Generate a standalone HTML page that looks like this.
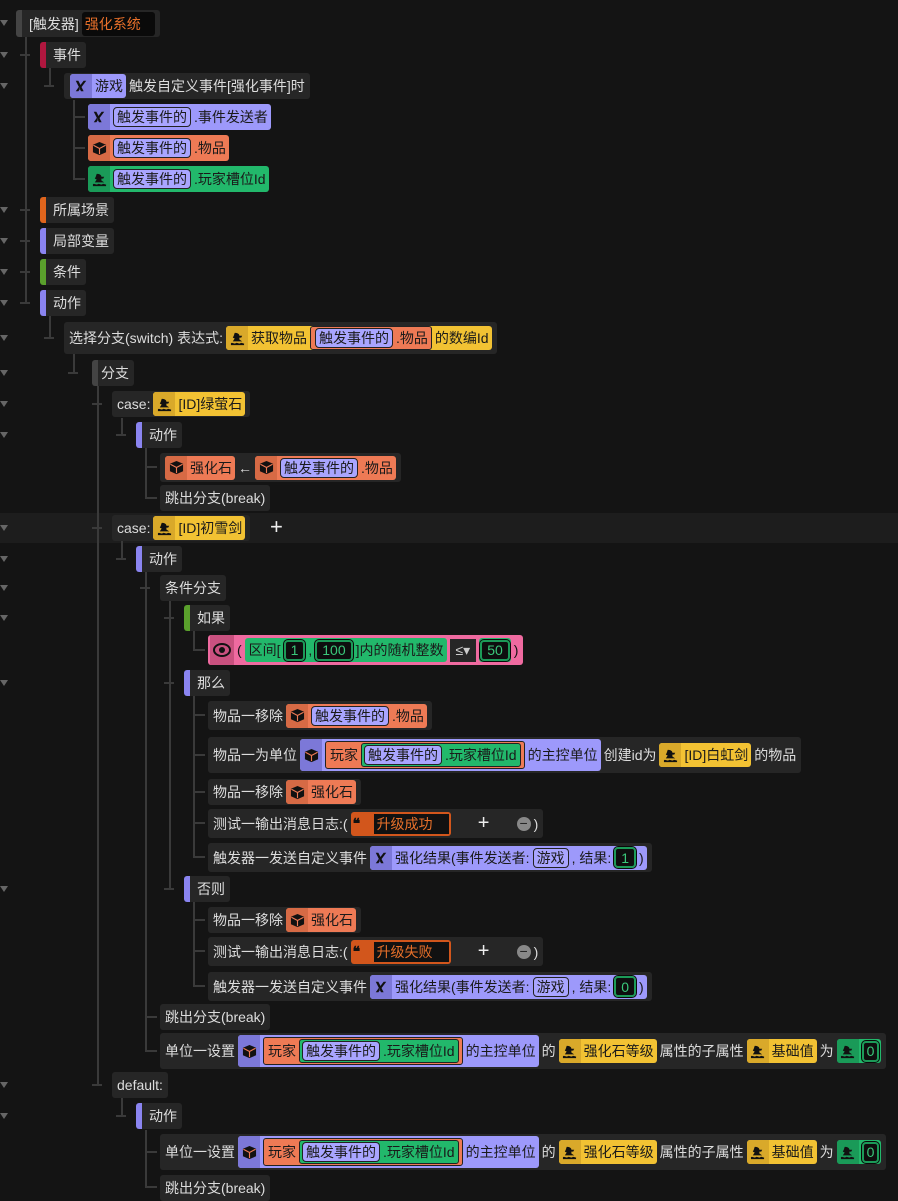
<!DOCTYPE html><html><head><meta charset="utf-8"><style>
body{margin:0;width:898px;height:1199px;background:#141414;overflow:hidden;font-family:"Liberation Sans","Noto Sans CJK SC",sans-serif;font-size:14px;color:#ddd;position:relative}
.n{position:absolute;height:26px;display:flex;align-items:center;background:#262626;border-radius:3px;padding:0 5px;white-space:nowrap;box-sizing:border-box;gap:3px}
.s{border-left:6px solid #444;padding-left:7px}
.c{display:inline-flex;align-items:center;height:24px;border-radius:3px;padding:0 3px 0 0;color:#1a1a1a;gap:3px;box-sizing:border-box}
.p{background:#9d99fb}.o{background:#ee7a55}.g{background:#22b86b}.y{background:#f2c233}.pk{background:#ef6aa0}
.ic{display:inline-flex;align-items:center;justify-content:center;width:22px;height:100%;border-radius:3px 0 0 3px}
.p>.ic{background:#7c78d8}.o>.ic{background:#d66a45}.g>.ic{background:#1a9a58}.y>.ic{background:#d9a92a}
.r{display:inline-flex;align-items:center;height:20px;border:1.5px solid #222;border-radius:4px;background:#a9a5ff;padding:0 3px;color:#1a1a1a;box-sizing:border-box}
.num{display:inline-flex;align-items:center;height:21px;border:2px solid #1c9a58;outline:1px solid #0a0a0a;border-radius:4px;background:#0e0e0e;color:#3ac87a;padding:0 5px;box-sizing:border-box}
.vl{position:absolute;width:2px;background:#3a3a3a}
.hl{position:absolute;height:2px;width:10px;background:#3a3a3a}
.tri{position:absolute;left:0;width:0;height:0;border-left:4px solid transparent;border-right:4px solid transparent;border-top:6px solid #666}
</style></head><body>
<svg width="0" height="0" style="position:absolute"><defs>
<symbol id="x" viewBox="0 0 16 16"><path d="M2 2h3l6 12H8zM11 2h3L8 10l-1.5-2zM2 14h3l2-3-1.5-2z" fill="#111"/></symbol>
<symbol id="b" viewBox="0 0 16 16"><path d="M8 1l7 3v8l-7 3-7-3V4z" fill="#111"/><path d="M8 8v6M1.5 4.5L8 8l6.5-3.5" stroke="#ee7a55" stroke-width="1.2" fill="none"/></symbol>
<symbol id="d" viewBox="0 0 16 16"><path d="M5 2c3 0 5 1 5 3l3 0-1 2-2 0 0 2 3 2H3l2-3-2-1 1-2z" fill="#111"/><path d="M1 13c2-1 3 1 5 0s3 1 5 0 3 1 4 0v2H1z" fill="#111"/></symbol>
</defs></svg>
<div style="position:absolute;left:0;top:513px;width:898px;height:30px;background:#1d1d1d"></div>
<div class="vl" style="left:25px;top:35px;height:269px"></div>
<div class="vl" style="left:49px;top:68px;height:19px"></div><div class="vl" style="left:49px;top:316px;height:23px"></div>
<div class="vl" style="left:73px;top:100px;height:80px"></div><div class="vl" style="left:73px;top:352px;height:22px"></div>
<div class="vl" style="left:97px;top:386px;height:700px"></div>
<div class="vl" style="left:121px;top:418px;height:18px"></div><div class="vl" style="left:121px;top:541px;height:19px"></div><div class="vl" style="left:121px;top:1098px;height:19px"></div>
<div class="vl" style="left:145px;top:448px;height:51px"></div><div class="vl" style="left:145px;top:572px;height:480px"></div><div class="vl" style="left:145px;top:1130px;height:58px"></div>
<div class="vl" style="left:169px;top:600px;height:290px"></div>
<div class="vl" style="left:193px;top:631px;height:20px"></div><div class="vl" style="left:193px;top:696px;height:162px"></div><div class="vl" style="left:193px;top:902px;height:85px"></div>
<div class="hl" style="left:20px;top:54px"></div><div class="hl" style="left:20px;top:209px"></div><div class="hl" style="left:20px;top:240px"></div><div class="hl" style="left:20px;top:271px"></div><div class="hl" style="left:20px;top:302px"></div>
<div class="hl" style="left:44px;top:85px"></div><div class="hl" style="left:44px;top:337px"></div>
<div class="hl" style="left:75px;top:116px"></div><div class="hl" style="left:75px;top:147px"></div><div class="hl" style="left:75px;top:178px"></div><div class="hl" style="left:68px;top:372px"></div>
<div class="hl" style="left:92px;top:403px"></div><div class="hl" style="left:92px;top:527px"></div><div class="hl" style="left:92px;top:1084px"></div>
<div class="hl" style="left:116px;top:434px"></div><div class="hl" style="left:116px;top:558px"></div><div class="hl" style="left:116px;top:1115px"></div>
<div class="hl" style="left:147px;top:466px"></div><div class="hl" style="left:147px;top:497px"></div><div class="hl" style="left:140px;top:587px"></div><div class="hl" style="left:147px;top:1016px"></div><div class="hl" style="left:147px;top:1050px"></div><div class="hl" style="left:147px;top:1151px"></div><div class="hl" style="left:147px;top:1186px"></div>
<div class="hl" style="left:164px;top:617px"></div><div class="hl" style="left:164px;top:682px"></div><div class="hl" style="left:164px;top:888px"></div>
<div class="hl" style="left:195px;top:649px"></div><div class="hl" style="left:195px;top:714px"></div><div class="hl" style="left:195px;top:754px"></div><div class="hl" style="left:195px;top:791px"></div><div class="hl" style="left:195px;top:822px"></div><div class="hl" style="left:195px;top:856px"></div><div class="hl" style="left:195px;top:919px"></div><div class="hl" style="left:195px;top:950px"></div><div class="hl" style="left:195px;top:985px"></div>
<div class="tri" style="top:20px"></div><div class="tri" style="top:52px"></div><div class="tri" style="top:83px"></div><div class="tri" style="top:207px"></div><div class="tri" style="top:238px"></div><div class="tri" style="top:269px"></div><div class="tri" style="top:300px"></div><div class="tri" style="top:335px"></div><div class="tri" style="top:370px"></div><div class="tri" style="top:401px"></div><div class="tri" style="top:432px"></div><div class="tri" style="top:525px"></div><div class="tri" style="top:556px"></div><div class="tri" style="top:585px"></div><div class="tri" style="top:615px"></div><div class="tri" style="top:680px"></div><div class="tri" style="top:886px"></div><div class="tri" style="top:1082px"></div><div class="tri" style="top:1113px"></div>

<div class="n s" style="left:16px;top:10px;height:27px">[触发器]<span style="background:#0a0a0a;color:#e8702a;padding:2px 14px 2px 3px;border-radius:3px">强化系统</span></div>
<div class="n s" style="left:40px;top:42px;border-left-color:#b0173f">事件</div>
<div class="n" style="left:64px;top:73px;padding-left:6px"><span class="c p"><span class="ic"><svg width="14" height="14"><use href="#x"/></svg></span>游戏</span>触发自定义事件[强化事件]时</div>
<span class="c p" style="position:absolute;left:88px;top:104px;height:26px"><span class="ic"><svg width="14" height="14"><use href="#x"/></svg></span><span class="r">触发事件的</span>.事件发送者</span>
<span class="c o" style="position:absolute;left:88px;top:135px;height:26px"><span class="ic"><svg width="15" height="15"><use href="#b"/></svg></span><span class="r">触发事件的</span>.物品</span>
<span class="c g" style="position:absolute;left:88px;top:166px;height:26px"><span class="ic"><svg width="15" height="15"><use href="#d"/></svg></span><span class="r">触发事件的</span>.玩家槽位Id</span>
<div class="n s" style="left:40px;top:197px;border-left-color:#e0651d">所属场景</div>
<div class="n s" style="left:40px;top:228px;border-left-color:#8a84f0">局部变量</div>
<div class="n s" style="left:40px;top:259px;border-left-color:#5aa02c">条件</div>
<div class="n s" style="left:40px;top:290px;border-left-color:#8a84f0">动作</div>
<div class="n" style="left:64px;top:322px;height:32px">选择分支(switch) 表达式:<span class="c y"><span class="ic"><svg width="15" height="15"><use href="#d"/></svg></span>获取物品<span class="c o" style="padding-left:4px;border:1.5px solid #222"><span class="r">触发事件的</span>.物品</span>的数编Id</span></div>
<div class="n s" style="left:92px;top:360px;padding-left:3px">分支</div>
<div class="n" style="left:112px;top:391px">case:<span class="c y"><span class="ic"><svg width="15" height="15"><use href="#d"/></svg></span>[ID]绿萤石</span></div>
<div class="n s" style="left:136px;top:422px;border-left-color:#8a84f0">动作</div>
<div class="n" style="left:160px;top:453px;height:29px"><span class="c o"><span class="ic"><svg width="15" height="15"><use href="#b"/></svg></span>强化石</span> ← <span class="c o"><span class="ic"><svg width="15" height="15"><use href="#b"/></svg></span><span class="r">触发事件的</span>.物品</span></div>
<div class="n" style="left:160px;top:485px">跳出分支(break)</div>
<div class="n" style="left:112px;top:515px">case:<span class="c y"><span class="ic"><svg width="15" height="15"><use href="#d"/></svg></span>[ID]初雪剑</span></div>
<div style="position:absolute;left:270px;top:514px;font-size:22px;color:#eee">+</div>
<div class="n s" style="left:136px;top:546px;border-left-color:#8a84f0">动作</div>
<div class="n" style="left:160px;top:575px">条件分支</div>
<div class="n s" style="left:184px;top:605px;border-left-color:#5aa02c">如果</div>
<div class="n pk" style="left:208px;top:635px;height:30px;padding-left:2px;color:#111">
<span style="display:inline-flex;width:24px;height:100%;background:#c9517f;align-items:center;justify-content:center"><svg width="18" height="14"><ellipse cx="9" cy="7" rx="8" ry="6" fill="none" stroke="#111" stroke-width="2"/><circle cx="9" cy="7" r="3" fill="#111"/></svg></span>(<span class="c g" style="padding-left:4px">区间[<span class="num">1</span>,<span class="num">100</span>]内的随机整数</span><span style="background:#262626;color:#ccc;padding:3px 6px">≤▾</span><span class="c g" style="padding:0 1px"><span class="num">50</span></span>)</div>
<div class="n s" style="left:184px;top:670px;border-left-color:#8a84f0">那么</div>
<div class="n" style="left:208px;top:701px;height:29px">物品一移除<span class="c o"><span class="ic"><svg width="15" height="15"><use href="#b"/></svg></span><span class="r">触发事件的</span>.物品</span></div>
<div class="n" style="left:208px;top:737px;height:36px">物品一为单位<span class="c p" style="height:32px"><span class="ic"><svg width="15" height="15"><use href="#b"/></svg></span><span class="c o" style="padding-left:4px;height:28px;border:1.5px solid #222">玩家<span class="c g" style="padding-left:2px;border:1.5px solid #222"><span class="r">触发事件的</span>.玩家槽位Id</span></span>的主控单位</span>创建id为<span class="c y"><span class="ic"><svg width="15" height="15"><use href="#d"/></svg></span>[ID]白虹剑</span>的物品</div>
<div class="n" style="left:208px;top:779px">物品一移除<span class="c o"><span class="ic"><svg width="15" height="15"><use href="#b"/></svg></span>强化石</span></div>
<div class="n" style="left:208px;top:809px;height:29px">测试一输出消息日志:(<span class="c" style="background:#d2561c;padding:0 2px;width:100px"><b style="color:#111;width:18px">❝</b><span style="background:#111;color:#e8702a;flex:1;height:20px;padding-left:3px">升级成功</span></span><span style="width:60px;text-align:center;font-size:20px;color:#eee">+</span><span style="display:inline-block;width:14px;height:14px;border-radius:50%;background:#888;color:#222;text-align:center;line-height:13px">−</span>)</div>
<div class="n" style="left:208px;top:843px;height:29px">触发器一发送自定义事件<span class="c p"><span class="ic"><svg width="14" height="14"><use href="#x"/></svg></span>强化结果(事件发送者: <span class="r">游戏</span>, 结果: <span class="num">1</span>)</span></div>
<div class="n s" style="left:184px;top:876px;border-left-color:#8a84f0">否则</div>
<div class="n" style="left:208px;top:907px">物品一移除<span class="c o"><span class="ic"><svg width="15" height="15"><use href="#b"/></svg></span>强化石</span></div>
<div class="n" style="left:208px;top:937px;height:29px">测试一输出消息日志:(<span class="c" style="background:#d2561c;padding:0 2px;width:100px"><b style="color:#111;width:18px">❝</b><span style="background:#111;color:#e8702a;flex:1;height:20px;padding-left:3px">升级失败</span></span><span style="width:60px;text-align:center;font-size:20px;color:#eee">+</span><span style="display:inline-block;width:14px;height:14px;border-radius:50%;background:#888;color:#222;text-align:center;line-height:13px">−</span>)</div>
<div class="n" style="left:208px;top:972px;height:29px">触发器一发送自定义事件<span class="c p"><span class="ic"><svg width="14" height="14"><use href="#x"/></svg></span>强化结果(事件发送者: <span class="r">游戏</span>, 结果: <span class="num">0</span>)</span></div>
<div class="n" style="left:160px;top:1004px">跳出分支(break)</div>
<div class="n" style="left:160px;top:1033px;height:36px">单位一设置<span class="c p" style="height:32px"><span class="ic"><svg width="15" height="15"><use href="#b"/></svg></span><span class="c o" style="padding-left:4px;height:28px;border:1.5px solid #222">玩家<span class="c g" style="padding-left:2px;border:1.5px solid #222"><span class="r">触发事件的</span>.玩家槽位Id</span></span>的主控单位</span>的<span class="c y"><span class="ic"><svg width="15" height="15"><use href="#d"/></svg></span>强化石等级</span>属性的子属性<span class="c y"><span class="ic"><svg width="15" height="15"><use href="#d"/></svg></span>基础值</span>为<span class="c g" style="padding-right:2px"><span class="ic"><svg width="15" height="15"><use href="#d"/></svg></span><span class="num" style="padding:0 3px">0</span></span></div>
<div class="n" style="left:112px;top:1072px">default:</div>
<div class="n s" style="left:136px;top:1103px;border-left-color:#8a84f0">动作</div>
<div class="n" style="left:160px;top:1134px;height:36px">单位一设置<span class="c p" style="height:32px"><span class="ic"><svg width="15" height="15"><use href="#b"/></svg></span><span class="c o" style="padding-left:4px;height:28px;border:1.5px solid #222">玩家<span class="c g" style="padding-left:2px;border:1.5px solid #222"><span class="r">触发事件的</span>.玩家槽位Id</span></span>的主控单位</span>的<span class="c y"><span class="ic"><svg width="15" height="15"><use href="#d"/></svg></span>强化石等级</span>属性的子属性<span class="c y"><span class="ic"><svg width="15" height="15"><use href="#d"/></svg></span>基础值</span>为<span class="c g" style="padding-right:2px"><span class="ic"><svg width="15" height="15"><use href="#d"/></svg></span><span class="num" style="padding:0 3px">0</span></span></div>
<div class="n" style="left:160px;top:1175px">跳出分支(break)</div>
</body></html>
